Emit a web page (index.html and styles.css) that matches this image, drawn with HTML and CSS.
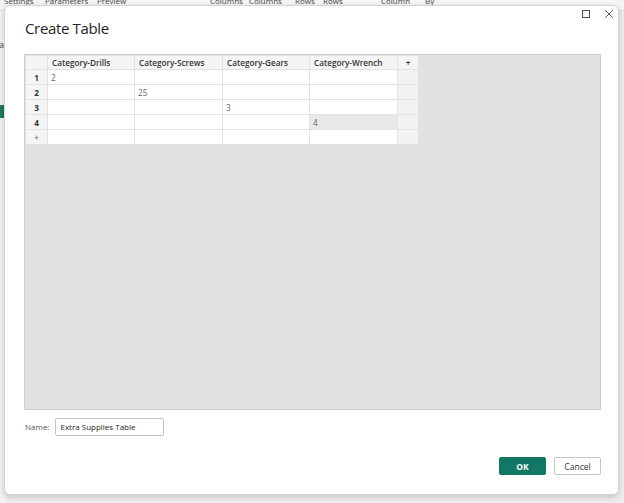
FILE: index.html
```html
<!DOCTYPE html>
<html>
<head>
<meta charset="utf-8">
<link rel="stylesheet" href="styles.css">
</head>
<body>
<div class="app">
  <div class="ribbon">
    <span class="rb rb1">Settings</span>
    <span class="rb rb2">Parameters</span>
    <span class="rb rb3">Preview</span>
    <span class="rb rb4">Columns</span>
    <span class="rb rb5">Columns</span>
    <span class="rb rb6">Rows</span>
    <span class="rb rb7">Rows</span>
    <span class="rb rb8">Column</span>
    <span class="rb rb9">By</span>
  </div>
  <div class="side">
    <span class="side-a">a</span>
    <span class="side-tile"></span>
  </div>
</div>

<div class="dialog">
  <div class="winctl">
    <svg class="ico" width="8" height="8" viewBox="0 0 8 8"><rect x="0.5" y="0.5" width="7" height="7" fill="none" stroke="#555" stroke-width="1"/></svg>
    <svg class="ico" width="8" height="8" viewBox="0 0 8 8"><path d="M0.3 0.3 L7.7 7.7 M7.7 0.3 L0.3 7.7" stroke="#555" stroke-width="1"/></svg>
  </div>
  <h1 class="title">Create Table</h1>
  <div class="grid-area">
    <table class="sheet">
      <colgroup>
        <col class="c-rh"><col class="c-a"><col class="c-b"><col class="c-c"><col class="c-d"><col class="c-plus">
      </colgroup>
      <thead>
        <tr><th class="corner"></th><th>Category-Drills</th><th>Category-Screws</th><th>Category-Gears</th><th>Category-Wrench</th><th class="addcol">+</th></tr>
      </thead>
      <tbody>
        <tr><th class="rh">1</th><td>2</td><td></td><td></td><td></td><td class="pc"></td></tr>
        <tr><th class="rh">2</th><td></td><td>25</td><td></td><td></td><td class="pc"></td></tr>
        <tr><th class="rh">3</th><td></td><td></td><td>3</td><td></td><td class="pc"></td></tr>
        <tr><th class="rh">4</th><td></td><td></td><td></td><td class="sel">4</td><td class="pc"></td></tr>
        <tr><th class="rh addrow">+</th><td></td><td></td><td></td><td></td><td class="pc"></td></tr>
      </tbody>
    </table>
  </div>
  <div class="name-row">
    <label class="name-label">Name:</label>
    <div class="name-input">Extra Supplies Table</div>
  </div>
  <div class="actions">
    <button class="btn ok">OK</button>
    <button class="btn cancel">Cancel</button>
  </div>
</div>
</body>
</html>
```

FILE: styles.css
```css
html, body {
  margin: 0;
  padding: 0;
  width: 624px;
  height: 503px;
  overflow: hidden;
  background: #eeeeee;
  font-family: "Open Sans", "Noto Sans", sans-serif;
}
.app {
  position: relative;
  width: 624px;
  height: 503px;
}
.ribbon {
  height: 10px;
  position: relative;
  background: #f5f5f5;
  border-bottom: 1px solid #dcdcdc;
}
.rb {
  position: absolute;
  top: -4px;
  font-size: 8px;
  line-height: 10px;
  color: #444;
}
.rb1 { left: 4px; }
.rb2 { left: 45px; }
.rb3 { left: 97px; }
.rb4 { left: 210px; }
.rb5 { left: 249px; }
.rb6 { left: 295px; }
.rb7 { left: 323px; }
.rb8 { left: 381px; }
.rb9 { left: 425px; }
.side {
  position: absolute;
  left: 0;
  top: 11px;
  width: 6px;
  height: 492px;
  background: #f3f3f3;
}
.side-a {
  position: absolute;
  left: -1px;
  top: 27px;
  font-size: 9px;
  color: #444;
}
.side-tile {
  position: absolute;
  left: 0;
  top: 94px;
  width: 5px;
  height: 13px;
  background: #1f7a5c;
}
.dialog {
  position: absolute;
  left: 4px;
  top: 5px;
  width: 615px;
  height: 490px;
  background: #ffffff;
  border: 1px solid #d4d4d4;
  border-radius: 6px;
  box-shadow: 0 2px 6px rgba(0,0,0,0.18);
  box-sizing: border-box;
  padding: 0 17px 0 19px;
  display: flex;
  flex-direction: column;
}
.winctl {
  position: absolute;
  right: 5px;
  top: 4px;
  display: flex;
  gap: 15px;
}
.title {
  margin: 13px 0 0 1px;
  height: 19px;
  font-size: 15px;
  font-weight: 400;
  letter-spacing: -0.35px;
  line-height: 19px;
  color: #252525;
}
.grid-area {
  margin-top: 16px;
  height: 356px;
  background: #e1e1e1;
  border: 1px solid #cccccc;
  box-sizing: border-box;
  flex: none;
}
.sheet {
  border-collapse: collapse;
  table-layout: fixed;
  width: 393px;
  font-size: 8.2px;
}
.c-rh { width: 22px; }
.c-a { width: 87px; }
.c-b { width: 88px; }
.c-c { width: 87px; }
.c-d { width: 88px; }
.c-plus { width: 21px; }
.sheet th, .sheet td {
  border: 1px solid #e3e3e3;
  height: 14px;
  padding: 0 0 0 3px;
  box-sizing: border-box;
  text-align: left;
  white-space: nowrap;
  overflow: hidden;
}
.sheet thead th {
  background: #f5f5f5;
  font-weight: 600;
  color: #333;
  padding-left: 4px;
}
.sheet thead th.corner { background: #f5f5f5; }
.sheet thead th.addcol, .sheet th.rh {
  text-align: center;
  padding: 0;
}
.sheet th.rh {
  background: #f5f5f5;
  font-weight: 700;
  color: #333;
}
.sheet th.addrow { font-weight: 400; color: #666; font-size: 9px; }
.sheet td {
  background: #ffffff;
  color: #666;
  height: 15px;
}
.sheet td.pc { background: #f2f2f2; }
.sheet td.sel { background: #e9e9e9; }
.name-row {
  margin-top: 8px;
  display: flex;
  align-items: center;
  gap: 6px;
}
.name-label {
  font-size: 8px;
  color: #555;
  margin-top: -2px;
  margin-left: 1px;
}
.name-input {
  width: 109px;
  height: 18px;
  border: 1px solid #c2c2c2;
  border-radius: 2px;
  box-sizing: border-box;
  font-size: 8px;
  color: #222;
  line-height: 16px;
  padding-left: 4px;
}
.actions {
  margin-top: 21px;
  display: flex;
  justify-content: flex-end;
  gap: 8px;
}
.btn {
  height: 18px;
  width: 47px;
  font-family: "Open Sans", "Noto Sans", sans-serif;
  font-size: 8.5px;
  border-radius: 2px;
  padding: 0;
  box-sizing: border-box;
}
.ok {
  background: #117865;
  border: 1px solid #117865;
  color: #fff;
  font-weight: 700;
}
.cancel {
  background: #fff;
  border: 1px solid #c6c6c6;
  color: #333;
}
```
